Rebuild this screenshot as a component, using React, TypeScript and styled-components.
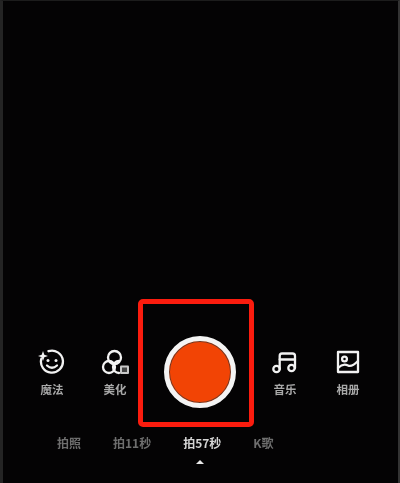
import * as React from 'react'
import styled, { createGlobalStyle } from 'styled-components'

const GlobalStyle = createGlobalStyle`
    html, body {
        margin: 0;
        padding: 0;
        background: #000;
    }
`

const Page = styled.div`
    box-sizing: border-box;
    width: 400px;
    height: 483px;
    display: flex;
    flex-direction: column;
    justify-content: flex-end;
    align-items: stretch;
    background: #040304;
    border-top: 1px solid #1c1c1c;
    border-left: 3px solid #242424;
    border-right: 2px solid #333;
    overflow: hidden;
    font-family: "Noto Sans CJK SC", "Liberation Sans", sans-serif;
`

// the frame is a video still so everything is a bit soft
const Controls = styled.div`
    display: flex;
    flex-direction: column;
    align-items: stretch;
    margin: 0 -2px 0 -3px;
    filter: blur(0.6px);
`

const ToolRow = styled.div`
    display: flex;
    justify-content: center;
    align-items: center;
    gap: 15px;
`

const Tool = styled.div`
    width: 48px;
    display: flex;
    flex-direction: column;
    align-items: center;
    gap: 5px;
`

const ToolLabel = styled.span`
    font-size: 11.5px;
    line-height: 14px;
    font-weight: 700;
    color: #a8a8a8;
    white-space: nowrap;
`

const ShutterSlot = styled.div`
    position: relative;
    margin: 0 10px;
`

const Shutter = styled.div`
    box-sizing: border-box;
    width: 72px;
    height: 72px;
    border-radius: 50%;
    background: #f24405;
    border: 5px solid #f4f4f4;
    box-shadow: inset 0 0 0 1px #6b3a28;
`

const Highlight = styled.div`
    position: absolute;
    left: -26px;
    top: -37px;
    width: 116px;
    height: 128px;
    box-sizing: border-box;
    border: 5px solid #fb1c0e;
    border-radius: 5px;
`

const Tabs = styled.div`
    display: flex;
    gap: 32px;
    margin-top: 27px;
    padding-left: 57px;
`

const Tab = styled.span<{ $active?: boolean }>`
    font-size: 12px;
    line-height: 16px;
    font-weight: 700;
    color: ${p => (p.$active ? '#d4d4d4' : '#6e6e6e')};
    white-space: nowrap;
`

const Caret = styled.div`
    align-self: center;
    width: 0;
    height: 0;
    margin-top: 9px;
    margin-bottom: 19px;
    border-left: 4px solid transparent;
    border-right: 4px solid transparent;
    border-bottom: 4px solid #e8e8e8;
`

const Icon = styled.svg`
    display: block;
    width: 28px;
    height: 28px;
    fill: none;
    stroke: #f2f2f2;
    stroke-width: 2.3;
    stroke-linecap: round;
    stroke-linejoin: round;
`

const MagicIcon = () => (
    <Icon viewBox="0 0 28 28">
        <path d="M10.5 2.2 A11 11 0 1 1 3.4 9.5" />
        <circle cx="10" cy="11.5" r="1.5" fill="#f2f2f2" stroke="none" />
        <circle cx="18" cy="11.5" r="1.5" fill="#f2f2f2" stroke="none" />
        <path d="M9 16.5 Q14 21 19 16.5" />
        <path d="M5 2 L6.3 5.7 L10 7 L6.3 8.3 L5 12 L3.7 8.3 L0 7 L3.7 5.7 Z" fill="#f2f2f2" stroke="none" />
    </Icon>
)

const BeautyIcon = () => (
    <Icon viewBox="0 0 28 28">
        <circle cx="13.5" cy="8.5" r="6.5" />
        <circle cx="8" cy="18" r="6" />
        <path d="M18 24 A6 6 0 1 1 18 12" />
        <rect x="19" y="16.5" width="9" height="8.5" rx="1" fill="#c9c9c9" stroke="none" />
        <rect x="21" y="18.5" width="5" height="4.5" fill="#444" stroke="none" />
    </Icon>
)

const MusicIcon = () => (
    <Icon viewBox="0 0 28 28">
        <circle cx="5.5" cy="20" r="3.2" />
        <circle cx="20.5" cy="19" r="3.2" />
        <path d="M8.7 20 V7 Q8.7 4.5 11 4.5 H21.5 Q24 4.5 24 7 V19" />
        <path d="M8.7 10.5 H24" />
    </Icon>
)

const AlbumIcon = () => (
    <Icon viewBox="0 0 28 28">
        <rect x="4" y="3" width="20" height="20" />
        <circle cx="10.5" cy="10" r="2.4" />
        <path d="M4 19 C8 15 11 15 14 16.5 S20 16 24 12" />
    </Icon>
)

const App: React.FC = (): JSX.Element => {
    return (
        <Page>
            <GlobalStyle />
            <Controls>
                <ToolRow>
                    <Tool>
                        <MagicIcon />
                        <ToolLabel>魔法</ToolLabel>
                    </Tool>
                    <Tool>
                        <BeautyIcon />
                        <ToolLabel>美化</ToolLabel>
                    </Tool>
                    <ShutterSlot>
                        <Shutter />
                        <Highlight />
                    </ShutterSlot>
                    <Tool>
                        <MusicIcon />
                        <ToolLabel>音乐</ToolLabel>
                    </Tool>
                    <Tool>
                        <AlbumIcon />
                        <ToolLabel>相册</ToolLabel>
                    </Tool>
                </ToolRow>
                <Tabs>
                    <Tab>拍照</Tab>
                    <Tab>拍11秒</Tab>
                    <Tab $active>拍57秒</Tab>
                    <Tab>K歌</Tab>
                </Tabs>
                <Caret />
            </Controls>
        </Page>
    )
}

export default App
